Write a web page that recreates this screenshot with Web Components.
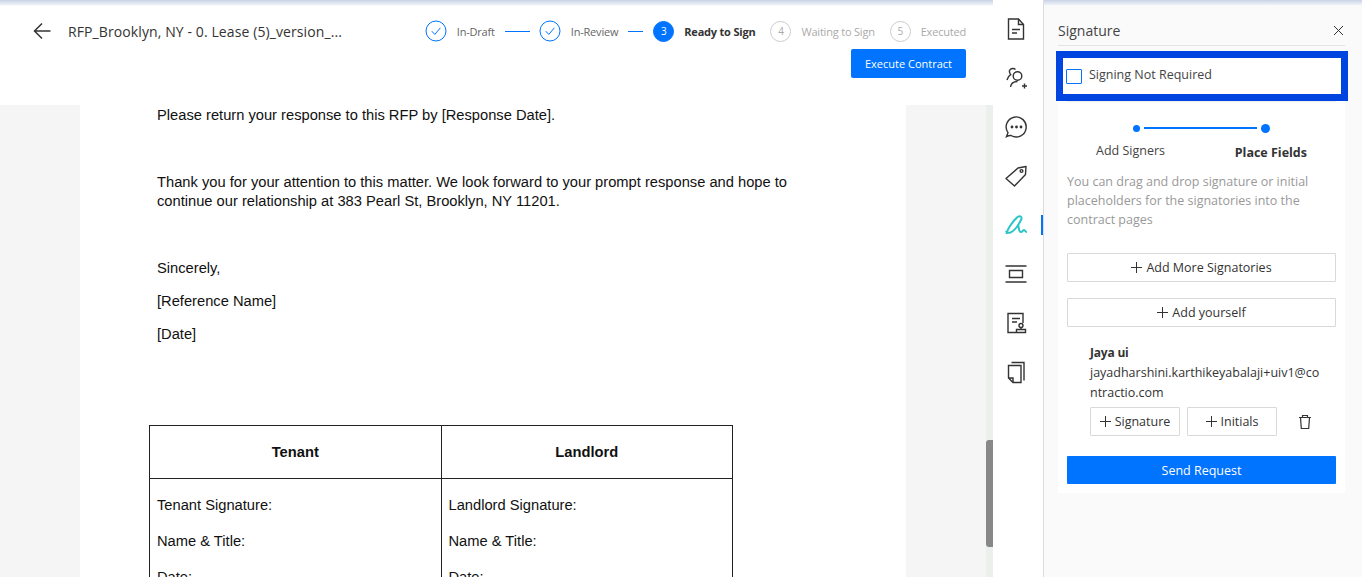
<!DOCTYPE html>
<html>
<head>
<meta charset="utf-8">
<style>
  html, body { margin: 0; height: 100%; overflow: hidden; background: #fff; }
  body { font-family: "Open Sans", sans-serif; color: #333; }
  app-shell { height: 577px; }
</style>
</head>
<body>
<template id="icon-defs"></template>

<app-shell>
  <doc-header slot="main" title="RFP_Brooklyn, NY - 0. Lease (5)_version_..."></doc-header>
  <doc-page slot="main"></doc-page>
  <tool-rail slot="rail"></tool-rail>
  <signature-panel slot="panel"></signature-panel>
</app-shell>

<script>
const CHECK = `<svg width="22" height="22" viewBox="0 0 22 22" fill="none"><circle cx="11" cy="11" r="10" stroke="#0073ff" stroke-width="1"/><path d="M6.8 11.2l3 3.2 5.6-6.6" stroke="#0073ff" stroke-width="1"/></svg>`

class AppShell extends HTMLElement {
  constructor() {
    super()
    this.attachShadow({ mode: 'open' })
    this.shadowRoot.innerHTML = `
      <style>
        :host { display: grid; grid-template-columns: 993px 51px 1fr; position: relative; }
        .main { display: flex; flex-direction: column; height: 577px; overflow: hidden; background: #f5f5f5; position: relative; }
        .track { position: absolute; right: 0; top: 105px; bottom: 0; width: 7px; background: #ecf0ec; }
        .thumb { position: absolute; right: 0; top: 440px; height: 107px; width: 7px; background: #888; border-radius: 3px 0 0 3px; }
        .shadow { position: absolute; left: 0; right: 0; top: 0; height: 6px; background: linear-gradient(#c9d3e6, #eef1f7 80%, #fff); z-index: 2; }
      </style>
      <div class="shadow"></div>
      <div class="main"><slot name="main"></slot><div class="track"></div><div class="thumb"></div></div>
      <slot name="rail"></slot>
      <slot name="panel"></slot>`
  }
}

class StepItem extends HTMLElement {
  constructor() {
    super()
    this.attachShadow({ mode: 'open' })
    const state = this.getAttribute('state')
    const num = this.getAttribute('num')
    let mark = `<span class="num">${num}</span>`
    if (state === 'done') mark = CHECK
    this.shadowRoot.innerHTML = `
      <style>
        :host { display: flex; align-items: center; gap: 10px; font-size: 11px; letter-spacing: -0.2px; color: #666; white-space: nowrap; }
        .num { width: 19px; height: 19px; border-radius: 50%; display: flex; align-items: center; justify-content: center; font-size: 10px; border: 1px solid #ccc; color: #aaa; }
        :host([state=active]) { font-weight: 700; color: #333; }
        :host([state=active]) .num { background: #0073ff; border-color: #0073ff; color: #fff; font-weight: 400; }
        :host([state=todo]) { color: #aaa; }
      </style>
      ${mark}<span><slot></slot></span>`
  }
}

class DocHeader extends HTMLElement {
  constructor() {
    super()
    this.attachShadow({ mode: 'open' })
    this.shadowRoot.innerHTML = `
      <style>
        :host { display: block; background: #fff; height: 105px; flex: none; box-sizing: border-box; padding: 20px 27px 0 33px; }
        .top { display: flex; align-items: center; height: 22px; }
        .title { font-size: 14px; color: #333; margin-left: 17px; white-space: nowrap; letter-spacing: 0.1px; }
        .steps { display: flex; align-items: center; margin-left: auto; }
        .line { width: 25px; height: 1px; background: #0073ff; margin: 0 9px 0 10px; }
        .line.short { width: 15px; margin: 0 10px 0 10px; }
        .gap { width: 15px; }
        .row { display: flex; justify-content: flex-end; margin-top: 7px; }
        button { width: 115px; height: 29px; background: #0073ff; border: 0; border-radius: 2px; color: #fff; font: 11px "Open Sans", sans-serif; padding: 0; }
      </style>
      <div class="top">
        <svg width="18" height="18" viewBox="0 0 18 18" fill="none" stroke="#333" stroke-width="1.5"><path d="M17.5 9H1.5M9 1.5L1.5 9 9 16.5"/></svg>
        <span class="title">${this.getAttribute('title')}</span>
        <div class="steps">
          <step-item state="done" num="1">In-Draft</step-item><span class="line"></span>
          <step-item state="done" num="2">In-Review</step-item><span class="line short"></span>
          <step-item state="active" num="3">Ready to Sign</step-item><span class="gap"></span>
          <step-item state="todo" num="4">Waiting to Sign</step-item><span class="gap"></span>
          <step-item state="todo" num="5">Executed</step-item>
        </div>
      </div>
      <div class="row"><button>Execute Contract</button></div>`
  }
}

class DocPage extends HTMLElement {
  constructor() {
    super()
    this.attachShadow({ mode: 'open' })
    this.shadowRoot.innerHTML = `
      <style>
        :host { display: block; background: #fff; width: 826px; margin-left: 80px; flex: 1; box-sizing: border-box; padding: 0 0 0 77px; font: 14.7px/19px "Liberation Sans", Arial, sans-serif; color: #111; overflow: hidden; }
        p { margin: 0; width: 650px; }
        table { border-collapse: collapse; margin: 81px 0 0 -8px; width: 584px; table-layout: fixed; }
        td, th { border: 1px solid #222; padding: 0 7px; vertical-align: top; }
        th { height: 52px; vertical-align: middle; font-size: 14.7px; }
        td p { width: auto; margin-top: 17px; margin-bottom: 14px; }
        td { height: 120px; }
      </style>
      <p style="margin-top:1px">Please return your response to this RFP by [Response Date].</p>
      <p style="margin-top:48px">Thank you for your attention to this matter. We look forward to your prompt response and hope to continue our relationship at 383 Pearl St, Brooklyn, NY 11201.</p>
      <p style="margin-top:48px">Sincerely,</p>
      <p style="margin-top:14px">[Reference Name]</p>
      <p style="margin-top:14px">[Date]</p>
      <table>
        <tr><th>Tenant</th><th>Landlord</th></tr>
        <tr>
          <td><p>Tenant Signature:</p><p>Name &amp; Title:</p><p>Date:</p></td>
          <td><p>Landlord Signature:</p><p>Name &amp; Title:</p><p>Date:</p></td>
        </tr>
      </table>`
  }
}

class ToolRail extends HTMLElement {
  constructor() {
    super()
    this.attachShadow({ mode: 'open' })
    this.shadowRoot.innerHTML = `
      <style>
        :host { display: flex; flex-direction: column; align-items: center; background: #fff; border-right: 1px solid #ddd; height: 577px; box-sizing: border-box; padding: 17px 4px 0 0; gap: 25px; position: relative; z-index: 3; }
        svg { width: 24px; height: 24px; fill: none; stroke: #333; stroke-width: 1.4; flex: none; }
        .marker { position: absolute; right: 0; top: 215px; width: 2px; height: 20px; background: #0073ff; }
      </style>
      <svg viewBox="0 0 24 24"><path d="M4.5 2h10l5 5.5V22h-15z"/><path d="M14.5 2v5.5h5M8 12.5h8M8 16h5"/></svg>
      <svg viewBox="0 0 24 24"><circle cx="13.5" cy="10" r="4.3"/><path d="M6.5 21c.5-3.500 3-5.500 7-5.500M18 20h5M20.500 17.500v5M11.500 3.500a3.800 3.800 0 0 0-6 1c-.5 2 .5 3 1.200 4.200-1.700 1-3.200 2.800-3.700 5.300"/></svg>
      <svg viewBox="0 0 24 24"><path d="M2.500 21.500l1.500-3.800A10 10 0 1 1 7 20.500c-1.500-.2-3 .3-4.500 1z"/><circle cx="8" cy="12" r=".7" fill="#333"/><circle cx="12.500" cy="12" r=".7" fill="#333"/><circle cx="17" cy="12" r=".7" fill="#333"/></svg>
      <svg viewBox="0 0 24 24"><path d="M2 14.500L14 4l8-1.500-.5 8L10.500 22z" stroke-linejoin="round"/><circle cx="17.500" cy="7" r="1.400"/></svg>
      <svg viewBox="0 0 24 24" style="stroke:#2cc5c5;stroke-width:2"><path d="M2.500 21c.5-4 6-13 11-17 3-2 5 0 3.500 3-2.500 5-7 11-10.500 12.500-3 1-4.500-.5-4-1.500M14 11c1 3 .5 8 3 8 1.500 0 2-2 3-2s1 2 3 2"/></svg>
      <svg viewBox="0 0 24 24"><path d="M1.500 4h21M1.500 20h21M5.500 8.500h13v7h-13z"/></svg>
      <svg viewBox="0 0 24 24"><path d="M12 21.500H4V2.500h15V12M8 7.500h8M8 11h5"/><circle cx="17" cy="14.500" r="2"/><path d="M17 16.500v2M12.500 18.500h9v3h-9z"/></svg>
      <svg viewBox="0 0 24 24"><path d="M7.500 2.500H20v18"/><path d="M4.500 5.500h12.500v17h-8l-4.500-4.500zM4.500 18h4.500v4.500"/></svg>
      <span class="marker"></span>`
  }
}

class OutlineBtn extends HTMLElement {
  constructor() {
    super()
    this.attachShadow({ mode: 'open' })
    this.shadowRoot.innerHTML = `
      <style>
        :host { display: flex; align-items: center; justify-content: center; gap: 4px; height: 29px; box-sizing: border-box; border: 1px solid #d9d9d9; border-radius: 1px; background: #fff; font-size: 12.500px; color: #333; white-space: nowrap; }
        svg { width: 11px; height: 11px; stroke: #333; stroke-width: 1; fill: none; }
      </style>
      <svg viewBox="0 0 11 11"><path d="M5.500 0v11M0 5.500h11"/></svg><slot></slot>`
  }
}

class SignaturePanel extends HTMLElement {
  constructor() {
    super()
    this.attachShadow({ mode: 'open' })
    this.shadowRoot.innerHTML = `
      <style>
        :host { display: block; background: #fafafa; height: 577px; box-sizing: border-box; padding: 15px 17px 0 14px; font-size: 12.500px; color: #333; position: relative; }
        .head { display: flex; justify-content: space-between; align-items: center; height: 30px; border-bottom: 1px solid #e3e3e8; font-size: 14px; color: #444; }
        .head svg { width: 9px; height: 9px; stroke: #333; stroke-width: 1; margin-right: 2px; }
        .skip { margin: 5px -3px 0 -2px; height: 50px; box-sizing: border-box; border: 7px solid #0045e0; background: #fff; display: flex; align-items: center; gap: 7px; padding: 0 3px; margin-bottom: 0; }
        .skip i { width: 14px; height: 13px; border: 1px solid #0073ff; border-radius: 1px; display: block; }
        .skip span { margin-top: -3px; color: #444; }
        .card { background: #fff; padding: 0 9px 9px; height: 392px; box-sizing: border-box; }
        .sep { height: 1px; background: #eee; margin-bottom: 21px; }
        .prog { display: flex; align-items: center; margin: 0 66px; gap: 4px; height: 10px; }
        .dot { width: 7px; height: 7px; border-radius: 50%; background: #0073ff; }
        .dot.big { width: 9px; height: 9px; }
        .bar { flex: 1; height: 2px; background: #0073ff; }
        .labels { display: flex; justify-content: space-between; padding: 0 29px; margin-top: 9px; }
        .labels b { margin-top: 2px; font-weight: 700; color: #333; }
        .labels span { color: #444; }
        .help { color: #999; line-height: 19px; margin: 11px 0 24px; }
        .stack { display: flex; flex-direction: column; gap: 16px; }
        .signer { padding: 0 0 0 23px; margin-top: 18px; }
        .name { font-weight: 700; line-height: 16px; font-size: 12px; letter-spacing: -0.2px; }
        .mail { line-height: 20px; width: 236px; word-break: break-all; margin-top: 2px; }
        .acts { display: flex; gap: 7px; align-items: center; margin: 4px 0 0; }
        .acts outline-btn { width: 90px; }
        .acts svg { width: 16px; height: 16px; stroke: #333; fill: none; stroke-width: 1.2; margin-left: 13px; }
        .send { display: block; width: 100%; height: 28px; margin-top: 20px; background: #0073ff; color: #fff; border: 0; border-radius: 1px; font: 12.500px "Open Sans", sans-serif; }
      </style>
      <div class="head"><span>Signature</span><svg viewBox="0 0 9 9"><path d="M0 0l9 9M9 0L0 9"/></svg></div>
      <div class="skip"><i></i><span>Signing Not Required</span></div>
      <div class="card">
        <div class="sep"></div>
        <div class="prog"><span class="dot"></span><span class="bar"></span><span class="dot big"></span></div>
        <div class="labels"><span>Add Signers</span><b>Place Fields</b></div>
        <div class="help">You can drag and drop signature or initial placeholders for the signatories into the contract pages</div>
        <div class="stack">
          <outline-btn>Add More Signatories</outline-btn>
          <outline-btn>Add yourself</outline-btn>
        </div>
        <div class="signer">
          <div class="name">Jaya ui</div>
          <div class="mail">jayadharshini.karthikeyabalaji+uiv1@contractio.com</div>
          <div class="acts">
            <outline-btn>Signature</outline-btn>
            <outline-btn>Initials</outline-btn>
            <svg viewBox="0 0 16 16"><path d="M2 3.500h12M5.500 3.500V1.500h5v2M3.500 3.500l.8 11h7.400l.8-11"/></svg>
          </div>
        </div>
        <button class="send">Send Request</button>
      </div>`
  }
}

customElements.define('outline-btn', OutlineBtn)
customElements.define('step-item', StepItem)
customElements.define('doc-header', DocHeader)
customElements.define('doc-page', DocPage)
customElements.define('tool-rail', ToolRail)
customElements.define('signature-panel', SignaturePanel)
customElements.define('app-shell', AppShell)
</script>
</body>
</html>
